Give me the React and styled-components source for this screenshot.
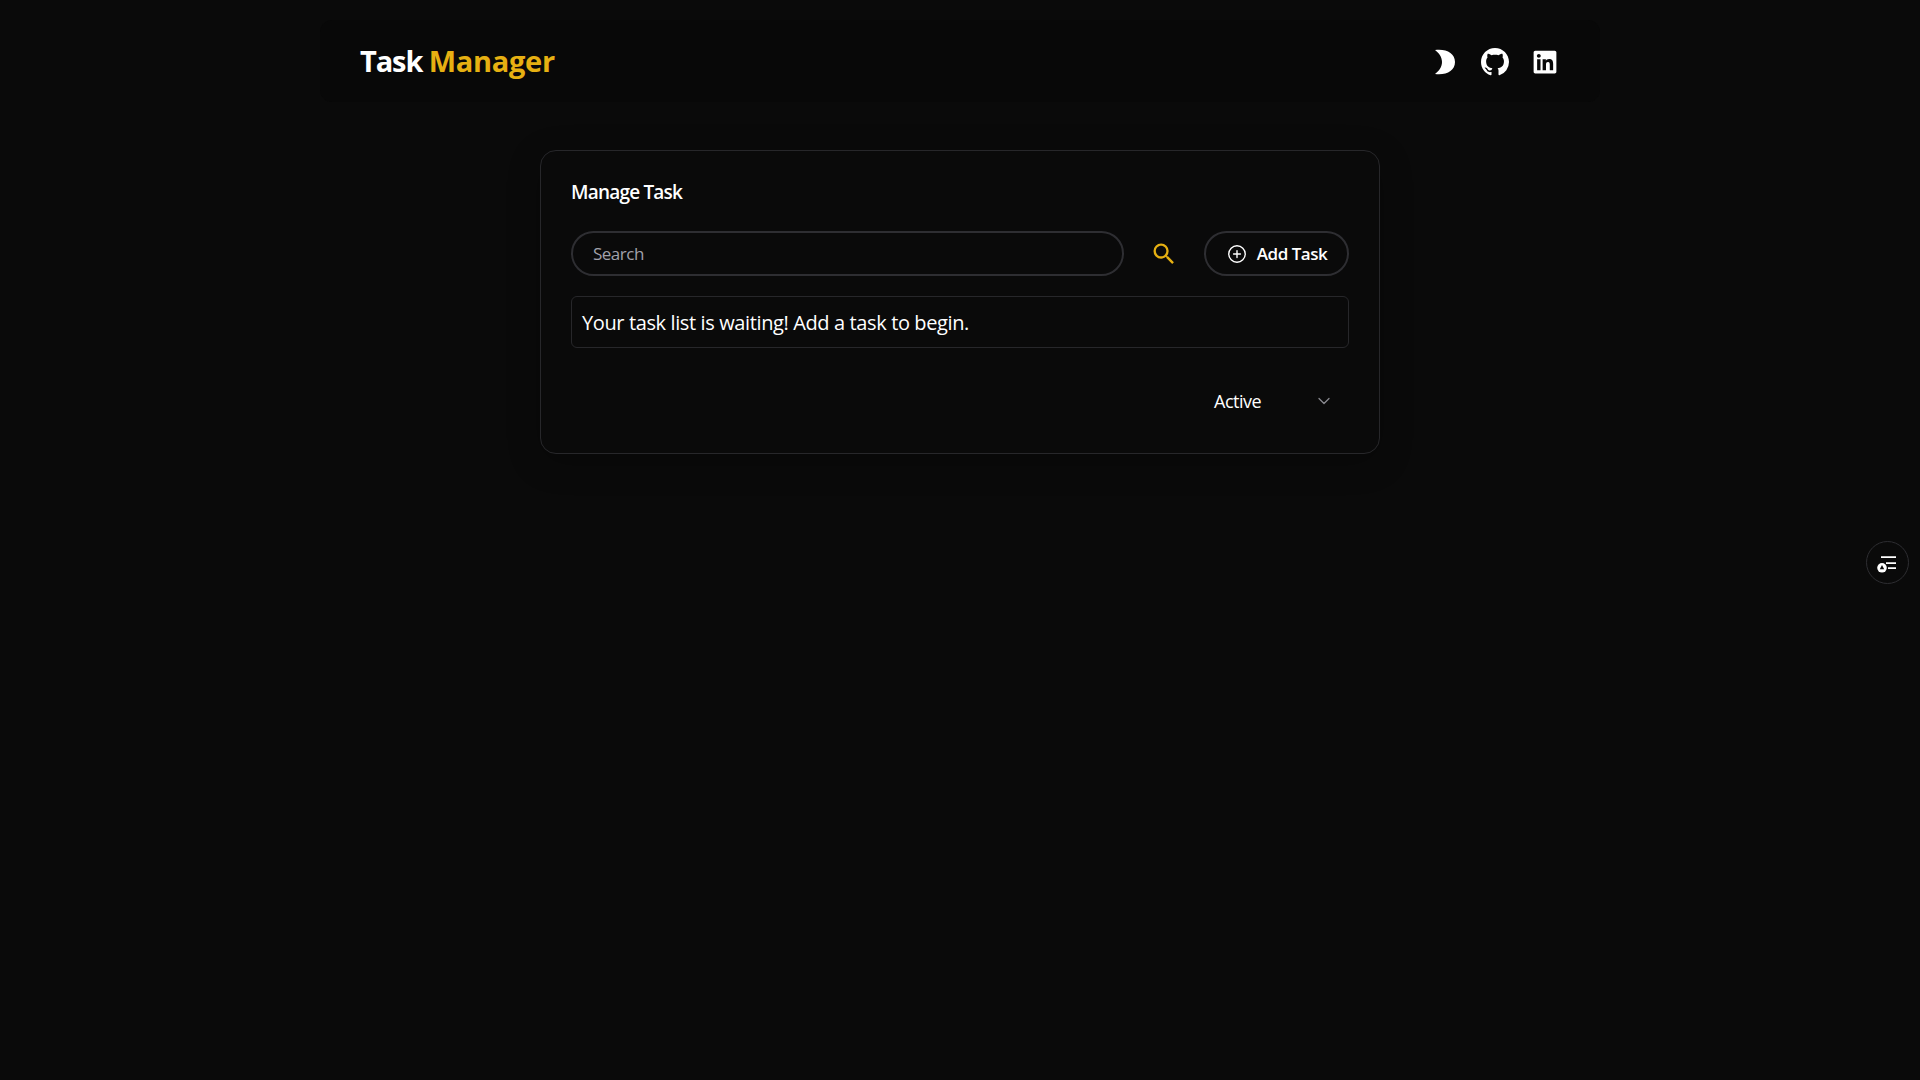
import React from 'react';
import styled, { createGlobalStyle } from 'styled-components';
import { BsGithub } from 'react-icons/bs';
import { FaLinkedin } from 'react-icons/fa';
import { MdSearch } from 'react-icons/md';
import { IoAddCircleOutline } from 'react-icons/io5';
import { ChevronDown } from 'lucide-react';

const GlobalStyle = createGlobalStyle`
  * { box-sizing: border-box; }
  html, body { margin: 0; height: 100%; }
  body {
    background: #0a0a0a;
    color: #fff;
    font-family: "Open Sans", "Noto Sans", sans-serif;
  }
`;

const Page = styled.div`
  min-height: 100vh;
  display: flex;
  flex-direction: column;
  align-items: center;
`;

const Header = styled.header`
  width: 1280px;
  height: 82px;
  margin-top: 20px;
  padding: 0 40px;
  display: flex;
  align-items: center;
  justify-content: space-between;
  background: #080808;
  border-radius: 12px;
`;

const Logo = styled.h1`
  margin: 0;
  padding-bottom: 2px;
  font-size: 29px;
  font-weight: 700;
  letter-spacing: -1.1px;
  span { color: #e6b012; letter-spacing: -0.3px; }
`;

const IconRow = styled.div`
  display: flex;
  align-items: center;
  gap: 23px;
  margin-right: 2px;
  padding-top: 2px;
  color: #fff;
  svg { display: block; }
`;

const Card = styled.section`
  width: 840px;
  height: 304px;
  margin-top: 48px;
  padding: 30px;
  border: 1px solid #27272a;
  border-radius: 16px;
  display: flex;
  flex-direction: column;
  box-shadow: 0 8px 32px rgba(0, 0, 0, 0.25);
`;

const Title = styled.h2`
  margin: 0;
  font-size: 19px;
  line-height: 22px;
  font-weight: 600;
  letter-spacing: -0.8px;
`;

const Toolbar = styled.div`
  display: flex;
  align-items: center;
  margin-top: 28px;
`;

const SearchInput = styled.input`
  width: 553px;
  height: 45px;
  padding: 0 20px;
  border: 2px solid #2e2e32;
  border-radius: 999px;
  background: transparent;
  color: #fff;
  font: 400 17px "Open Sans", sans-serif;
  letter-spacing: -0.5px;
  outline: none;
  &::placeholder { color: #a1a1aa; opacity: 1; }
`;

const SearchIcon = styled(MdSearch)`
  margin-left: 26px;
  color: #e6b012;
  flex: none;
`;

const AddButton = styled.button`
  margin-left: 26px;
  width: 145px;
  height: 45px;
  border: 2px solid #2e2e32;
  border-radius: 999px;
  background: transparent;
  color: #fff;
  font: 600 17px "Open Sans", sans-serif;
  letter-spacing: -0.5px;
  display: flex;
  align-items: center;
  justify-content: center;
  gap: 9px;
`;

const EmptyBox = styled.div`
  margin-top: 20px;
  height: 52px;
  padding: 0 10px;
  border: 1px solid #27272a;
  border-radius: 6px;
  display: flex;
  align-items: center;
  font-size: 20px;
  letter-spacing: -0.38px;
`;

const Filter = styled.div`
  margin-top: 41px;
  align-self: flex-end;
  width: 135px;
  padding-right: 15px;
  display: flex;
  align-items: center;
  justify-content: space-between;
  font-size: 18px;
  letter-spacing: -0.5px;
  svg { color: #8a8a90; }
`;

const FloatButton = styled.button`
  position: fixed;
  left: 1866px;
  top: 541px;
  width: 43px;
  height: 43px;
  padding: 0;
  border: 1px solid #2e2e32;
  border-radius: 50%;
  background: #0a0a0a;
  color: #fff;
  display: flex;
  align-items: center;
  justify-content: center;
`;

const MoonIcon = () => (
  <svg width="24" height="26" viewBox="0 0 24 26" fill="currentColor">
    <path d="M1 1C12 -0.5 21 4 21 13C21 22 12 26.5 1 25C5 22 8 18 8 13C8 8 5 4 1 1Z" />
  </svg>
);

const TaskFilterIcon = () => (
  <svg width="22" height="20" viewBox="0 0 22 20" fill="none" stroke="currentColor" strokeWidth="1.7">
    <path d="M4 4.2H19M9 10.2H19M11 15.2H19" />
    <circle cx="5" cy="14.8" r="4.8" fill="currentColor" stroke="none" />
    <path d="M5 12L7.2 16.2H2.8Z" fill="#0a0a0a" stroke="none" />
  </svg>
);

export default function App() {
  return (
    <Page>
      <GlobalStyle />
      <Header>
        <Logo>Task <span>Manager</span></Logo>
        <IconRow>
          <MoonIcon />
          <BsGithub size={28} />
          <FaLinkedin size={26} />
        </IconRow>
      </Header>
      <Card>
        <Title>Manage Task</Title>
        <Toolbar>
          <SearchInput placeholder="Search" />
          <SearchIcon size={28} />
          <AddButton>
            <IoAddCircleOutline size={22} />
            Add Task
          </AddButton>
        </Toolbar>
        <EmptyBox>Your task list is waiting! Add a task to begin.</EmptyBox>
        <Filter>
          Active
          <ChevronDown size={20} strokeWidth={1.5} />
        </Filter>
      </Card>
      <FloatButton aria-label="Tasks">
        <TaskFilterIcon />
      </FloatButton>
    </Page>
  );
}
